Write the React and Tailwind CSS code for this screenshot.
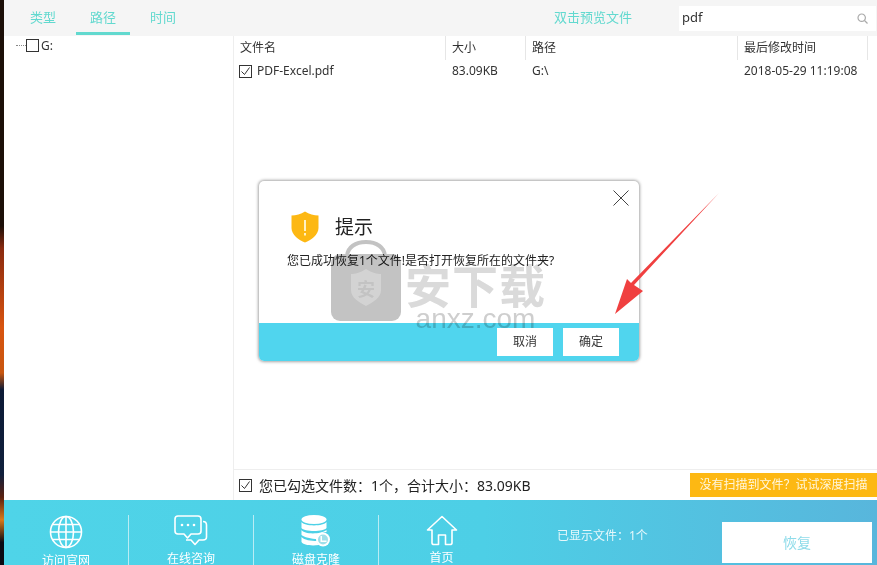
import React from "react";

const font = { fontFamily: '"Noto Sans", "Noto Sans CJK SC", sans-serif' };

function Check({ checked }) {
  return (
    <span className="flex h-[13px] w-[13px] shrink-0 items-center justify-center border border-[#333] bg-white">
      {checked && (
        <svg width="11" height="11" viewBox="0 0 11 11" fill="none" stroke="#333" strokeWidth="1">
          <path d="M1.5 5.5 L4.5 8.5 L9.5 1.5" />
        </svg>
      )}
    </span>
  );
}

function Globe() {
  return (
    <svg width="34" height="34" viewBox="0 0 34 34" fill="none" stroke="#fff" strokeWidth="1.6">
      <circle cx="17" cy="17" r="15.5" />
      <ellipse cx="17" cy="17" rx="7.5" ry="15.5" />
      <path d="M17 1.5 V32.5 M3.5 9.5 H30.5 M1.5 17 H32.5 M3.5 24.5 H30.5" />
    </svg>
  );
}
function Chat() {
  return (
    <svg width="34" height="32" viewBox="0 0 34 32" fill="none" stroke="#fff" strokeWidth="1.6" strokeLinejoin="round">
      <path d="M4 1 H24 Q27 1 27 4 V16 Q27 19 24 19 H17 L13.5 23 L10 19 H4 Q1 19 1 16 V4 Q1 1 4 1 Z" />
      <path d="M29 6.5 Q32.5 6.5 32.5 10 V22 Q32.5 25 29 25 H25 L21 29.5 L17 25 H12" />
      <circle cx="8" cy="10" r="1.3" fill="#fff" stroke="none" />
      <circle cx="14" cy="10" r="1.3" fill="#fff" stroke="none" />
      <circle cx="20" cy="10" r="1.3" fill="#fff" stroke="none" />
    </svg>
  );
}
function Disk() {
  return (
    <svg width="30" height="33" viewBox="0 0 30 33" fill="#fff">
      <ellipse cx="13" cy="4.5" rx="12.5" ry="4.5" />
      <path d="M0.5 7 C3 11.5 23 11.5 25.5 7 V13 C23 17 3 17 0.5 13 Z" />
      <path d="M0.5 15 C3 19.5 20 19.5 25.5 15 V17 C20 17 16 22 17 24 C10 24 3 22 0.5 20 Z" />
      <path d="M0.5 22 C3 25 10 26 16 26 C16.5 28 17 29 18 30 C10 31 2 30 0.5 27 Z" />
      <circle cx="22" cy="24.5" r="7" fill="#fff" />
      <circle cx="22" cy="24.5" r="5" fill="#9fdfe9" />
      <path d="M21 21 V25.5 H25.5 V27 H19.5 V21 Z" fill="#fff" />
    </svg>
  );
}
function Home() {
  return (
    <svg width="32" height="31" viewBox="0 0 32 31" fill="none" stroke="#fff" strokeWidth="1.6" strokeLinejoin="round">
      <path d="M16 1.5 L30.5 15 H26 V28 Q26 29.5 24 29.5 H19.5 V20 H12.5 V29.5 H8 Q6 29.5 6 28 V15 H1.5 Z" />
    </svg>
  );
}
function Shield() {
  return (
    <svg width="28" height="32" viewBox="0 0 28 32">
      <path d="M14 0.5 C18 3 23 4.5 27.5 4.5 V17 C27.5 24 20 29 14 31.5 C8 29 0.5 24 0.5 17 V4.5 C5 4.5 10 3 14 0.5 Z" fill="#fdb813" />
      <rect x="13" y="9" width="2" height="11" fill="#fff1c4" />
      <rect x="13" y="22" width="2" height="2.5" fill="#fff1c4" />
    </svg>
  );
}
function Bag() {
  return (
    <svg width="72" height="82" viewBox="0 0 72 82">
      <path d="M17 22 V17 C17 7 26 2 36 2 C46 2 55 7 55 17 V22" fill="none" stroke="#bdbdbd" strokeWidth="4" />
      <rect x="1" y="14" width="70" height="67" rx="9" fill="#bdbdbd" />
      <path d="M36 29 C42 33 47 34 51 34 V50 C51 58 43 62 36 66 C29 62 21 58 21 50 V34 C25 34 30 33 36 29 Z" fill="#cfcfcf" />
      <text x="36" y="56" textAnchor="middle" fontSize="18" fontWeight="700" fill="#bdbdbd" style={{ fontFamily: '"Noto Sans CJK SC", sans-serif' }}>安</text>
    </svg>
  );
}

function FooterItem({ icon, label, divider }) {
  return (
    <div className={`flex h-[50px] w-[125px] shrink-0 flex-col items-center ${divider ? "border-r border-[#b9ecf4]" : ""}`}>
      <div className="flex h-[36px] items-center">{icon}</div>
      <div className="mt-[4px] text-[12px] leading-[16px] text-white whitespace-nowrap">{label}</div>
    </div>
  );
}

export default function App() {
  return (
    <div className="relative flex h-[565px] w-[877px] overflow-hidden bg-white" style={font}>
      <div className="h-full w-[4px] shrink-0 bg-[linear-gradient(180deg,#1c0f08_0%,#1c0f08_40%,#8a2a10_44%,#d8540f_58%,#c8560f_66%,#0c1a36_69%,#10203c_84%,#5a2010_88%,#d87a1a_92%,#0a0a12_96%,#0a0a12_100%)]" />
      <div className="flex min-w-0 flex-1 flex-col">
        <div className="flex h-[36px] shrink-0 items-center bg-[#f5f5f5] text-[13px] text-[#62d9cf]">
          <div className="ml-[12px] flex h-[36px] w-[54px] items-center justify-center">类型</div>
          <div className="ml-[6px] flex h-[33px] w-[54px] items-center justify-center border-b-[3px] border-[#62d9cf] pt-[3px]">路径</div>
          <div className="ml-[6px] flex h-[36px] w-[54px] items-center justify-center">时间</div>
          <div className="ml-[358px] w-[90px] text-center whitespace-nowrap">双击预览文件</div>
          <div className="ml-[41px] flex h-[25px] w-[197px] items-center justify-between bg-white pl-[3px] pr-[8px] text-[13px] text-[#333]">
            <span>pdf</span>
            <svg width="11" height="11" viewBox="0 0 11 11" fill="none" stroke="#aaa" strokeWidth="1.2">
              <circle cx="4.7" cy="4.7" r="3.7" />
              <path d="M7.5 7.5 L10.5 10.5" />
            </svg>
          </div>
        </div>

        <div className="flex min-h-0 flex-1">
          <div className="flex w-[230px] shrink-0 items-start border-r border-[#eeeeee] pl-[12px] pt-[3px] text-[12px] text-[#333]">
            <span className="mt-[6px] w-[10px] border-t border-dotted border-[#888]" />
            <Check />
            <span className="ml-[2px] leading-[13px]">G:</span>
          </div>
          <div className="flex min-w-0 flex-1 flex-col">
            <div className="flex-1 text-[12px] text-[#333]">
              <div className="flex h-[24px] items-center">
                <div className="flex h-full w-[212px] items-center border-r border-[#e6e6e6] pl-[6px]">文件名</div>
                <div className="flex h-full w-[80px] items-center border-r border-[#e6e6e6] pl-[6px]">大小</div>
                <div className="flex h-full w-[212px] items-center border-r border-[#e6e6e6] pl-[6px]">路径</div>
                <div className="flex h-full w-[130px] items-center border-r border-[#e6e6e6] pl-[6px]">最后修改时间</div>
              </div>
              <div className="flex h-[22px] items-center">
                <div className="flex w-[212px] items-center gap-[5px] pl-[5px]">
                  <Check checked />
                  <span>PDF-Excel.pdf</span>
                </div>
                <div className="w-[80px] pl-[6px]">83.09KB</div>
                <div className="w-[212px] pl-[6px]">G:\</div>
                <div className="w-[133px] pl-[6px] whitespace-nowrap">2018-05-29 11:19:08</div>
              </div>
            </div>
            <div className="flex h-[31px] shrink-0 items-center border-t border-[#eeeeee]">
              <div className="ml-[5px] flex flex-1 items-center gap-[7px] text-[14px] text-[#222]">
                <Check checked />
                <span className="whitespace-nowrap">您已勾选文件数：1个，合计大小：83.09KB</span>
              </div>
              <div className="flex h-[24px] w-[187px] items-center justify-center bg-[#fdb813] text-[12px] text-[#fff6dc] whitespace-nowrap">
                没有扫描到文件？试试深度扫描
              </div>
            </div>
          </div>
        </div>

        <div className="flex h-[65px] shrink-0 items-start bg-[linear-gradient(90deg,#4fd4e8_0%,#4dcfe6_55%,#58b6dc_100%)] pt-[15px]">
          <FooterItem icon={<Globe />} label="访问官网" divider />
          <FooterItem icon={<Chat />} label="在线咨询" divider />
          <FooterItem icon={<Disk />} label="磁盘克隆" divider />
          <FooterItem icon={<Home />} label="首页" />
          <div className="ml-[53px] mt-[12px] w-[165px] text-[12px] text-[#e6f8fb] whitespace-nowrap">已显示文件：1个</div>
          <div className="mt-[7px] flex h-[41px] w-[150px] items-center justify-center bg-white text-[14px] text-[#8fdcea]">恢复</div>
        </div>
      </div>

      <div className="absolute left-[259px] top-[181px] flex h-[180px] w-[380px] flex-col overflow-hidden rounded-[5px] bg-white shadow-[0_0_3px_1px_rgba(0,0,0,0.35)]">
        <div className="relative flex-1">
          <svg className="absolute right-[10px] top-[9px]" width="16" height="16" viewBox="0 0 16 16" stroke="#444" strokeWidth="1" fill="none">
            <path d="M0.5 0.5 L15.5 15.5 M15.5 0.5 L0.5 15.5" />
          </svg>
          <div className="ml-[32px] mt-[30px] flex items-center gap-[16px]">
            <Shield />
            <span className="text-[19px] leading-[28px] text-[#222]">提示</span>
          </div>
          <div className="ml-[28px] mt-[9px] text-[12px] leading-[18px] text-[#222] whitespace-nowrap">您已成功恢复1个文件!是否打开恢复所在的文件夹?</div>
        </div>
        <div className="flex h-[38px] shrink-0 items-center justify-end gap-[10px] bg-[#50d5ee] pb-[1px] pr-[20px]">
          <div className="flex h-[28px] w-[56px] items-center justify-center bg-white text-[12px] text-[#333]">取消</div>
          <div className="flex h-[28px] w-[56px] items-center justify-center bg-white text-[12px] text-[#333]">确定</div>
        </div>
      </div>

      <div className="absolute left-[330px] top-[240px] flex opacity-90 mix-blend-multiply">
        <Bag />
        <div className="ml-[3px] mt-[20px] flex flex-col items-center text-[#c9c9c9]">
          <span className="text-[46px] font-bold leading-[46px] tracking-[1px] whitespace-nowrap text-[#d6d6d6]" style={{ fontFamily: '"Noto Sans CJK SC", sans-serif' }}>安下载</span>
          <span className="text-[28px] leading-[26px] whitespace-nowrap" style={{ fontFamily: '"Liberation Sans", sans-serif' }}>anxz.com</span>
        </div>
      </div>

      <svg className="absolute left-[610px] top-[190px]" width="112" height="128" viewBox="0 0 112 128">
        <path d="M109 3 L24 95 L33 101 L5 124 L17 89 L21 93 Z" fill="#f04040" />
      </svg>
    </div>
  );
}
